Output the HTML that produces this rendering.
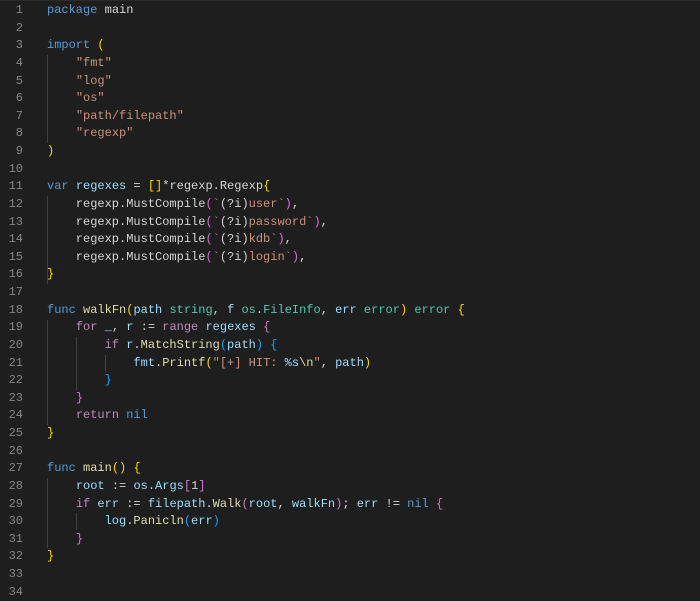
<!DOCTYPE html>
<html><head><meta charset="utf-8"><style>
html,body{margin:0;background:#1e1e1e;width:700px;height:601px;overflow:hidden}
.e{position:relative;font-family:"Liberation Mono",monospace;font-size:12px;color:#d4d4d4;border-top:1px solid #2b2b2b;padding-top:1px}
.l{height:17.64px;line-height:17.64px;white-space:pre;position:relative}
.n{position:absolute;left:0;width:23px;text-align:right;color:#858585}
.c{position:absolute;left:47px}
.k{color:#569cd6}.p{color:#c586c0}.s{color:#ce9178}.t{color:#4ec9b0}.v{color:#9cdcfe}.f{color:#dcdcaa}
.y{color:#ffd700}.m{color:#da70d6}.b{color:#179fff}
.g{position:absolute;width:1px;background:#404040}
</style></head><body><div class="e">
<div class="g" style="left:47px;top:54px;height:88px"></div>
<div class="g" style="left:47px;top:195px;height:88px"></div>
<div class="g" style="left:47px;top:319px;height:105px"></div>
<div class="g" style="left:76px;top:336px;height:53px"></div>
<div class="g" style="left:105px;top:354px;height:17px"></div>
<div class="g" style="left:47px;top:477px;height:70px"></div>
<div class="g" style="left:76px;top:512px;height:17px"></div>
<div class="l"><span class="n">1</span><span class="c"><span class="k">package</span> main</span></div>
<div class="l"><span class="n">2</span></div>
<div class="l"><span class="n">3</span><span class="c"><span class="k">import</span> <span class="y">(</span></span></div>
<div class="l"><span class="n">4</span><span class="c">    <span class="s">"fmt"</span></span></div>
<div class="l"><span class="n">5</span><span class="c">    <span class="s">"log"</span></span></div>
<div class="l"><span class="n">6</span><span class="c">    <span class="s">"os"</span></span></div>
<div class="l"><span class="n">7</span><span class="c">    <span class="s">"path/filepath"</span></span></div>
<div class="l"><span class="n">8</span><span class="c">    <span class="s">"regexp"</span></span></div>
<div class="l"><span class="n">9</span><span class="c"><span class="y">)</span></span></div>
<div class="l"><span class="n">10</span></div>
<div class="l"><span class="n">11</span><span class="c"><span class="k">var</span> <span class="v">regexes</span> = <span class="y">[]</span>*regexp.Regexp<span class="y">{</span></span></div>
<div class="l"><span class="n">12</span><span class="c">    regexp.MustCompile<span class="m">(</span><span class="s">`</span>(?i)<span class="s">user`</span><span class="m">)</span>,</span></div>
<div class="l"><span class="n">13</span><span class="c">    regexp.MustCompile<span class="m">(</span><span class="s">`</span>(?i)<span class="s">password`</span><span class="m">)</span>,</span></div>
<div class="l"><span class="n">14</span><span class="c">    regexp.MustCompile<span class="m">(</span><span class="s">`</span>(?i)<span class="s">kdb`</span><span class="m">)</span>,</span></div>
<div class="l"><span class="n">15</span><span class="c">    regexp.MustCompile<span class="m">(</span><span class="s">`</span>(?i)<span class="s">login`</span><span class="m">)</span>,</span></div>
<div class="l"><span class="n">16</span><span class="c"><span class="y">}</span></span></div>
<div class="l"><span class="n">17</span></div>
<div class="l"><span class="n">18</span><span class="c"><span class="k">func</span> <span class="f">walkFn</span><span class="y">(</span><span class="v">path</span> <span class="t">string</span>, <span class="v">f</span> <span class="t">os</span>.<span class="t">FileInfo</span>, <span class="v">err</span> <span class="t">error</span><span class="y">)</span> <span class="t">error</span> <span class="y">{</span></span></div>
<div class="l"><span class="n">19</span><span class="c">    <span class="p">for</span> <span class="v">_</span>, <span class="v">r</span> := <span class="p">range</span> <span class="v">regexes</span> <span class="m">{</span></span></div>
<div class="l"><span class="n">20</span><span class="c">        <span class="p">if</span> <span class="v">r</span>.<span class="f">MatchString</span><span class="b">(</span><span class="v">path</span><span class="b">)</span> <span class="b">{</span></span></div>
<div class="l"><span class="n">21</span><span class="c">            <span class="v">fmt</span>.<span class="f">Printf</span><span class="y">(</span><span class="s">"[+] HIT: </span><span class="v">%s</span><span class="f">\n</span><span class="s">"</span>, <span class="v">path</span><span class="y">)</span></span></div>
<div class="l"><span class="n">22</span><span class="c">        <span class="b">}</span></span></div>
<div class="l"><span class="n">23</span><span class="c">    <span class="m">}</span></span></div>
<div class="l"><span class="n">24</span><span class="c">    <span class="p">return</span> <span class="k">nil</span></span></div>
<div class="l"><span class="n">25</span><span class="c"><span class="y">}</span></span></div>
<div class="l"><span class="n">26</span></div>
<div class="l"><span class="n">27</span><span class="c"><span class="k">func</span> <span class="f">main</span><span class="y">()</span> <span class="y">{</span></span></div>
<div class="l"><span class="n">28</span><span class="c">    <span class="v">root</span> := <span class="v">os</span>.<span class="v">Args</span><span class="m">[</span>1<span class="m">]</span></span></div>
<div class="l"><span class="n">29</span><span class="c">    <span class="p">if</span> <span class="v">err</span> := <span class="v">filepath</span>.<span class="f">Walk</span><span class="m">(</span><span class="v">root</span>, <span class="v">walkFn</span><span class="m">)</span>; <span class="v">err</span> != <span class="k">nil</span> <span class="m">{</span></span></div>
<div class="l"><span class="n">30</span><span class="c">        <span class="v">log</span>.<span class="f">Panicln</span><span class="b">(</span><span class="v">err</span><span class="b">)</span></span></div>
<div class="l"><span class="n">31</span><span class="c">    <span class="m">}</span></span></div>
<div class="l"><span class="n">32</span><span class="c"><span class="y">}</span></span></div>
<div class="l"><span class="n">33</span></div>
<div class="l"><span class="n">34</span></div>
</div></body></html>
